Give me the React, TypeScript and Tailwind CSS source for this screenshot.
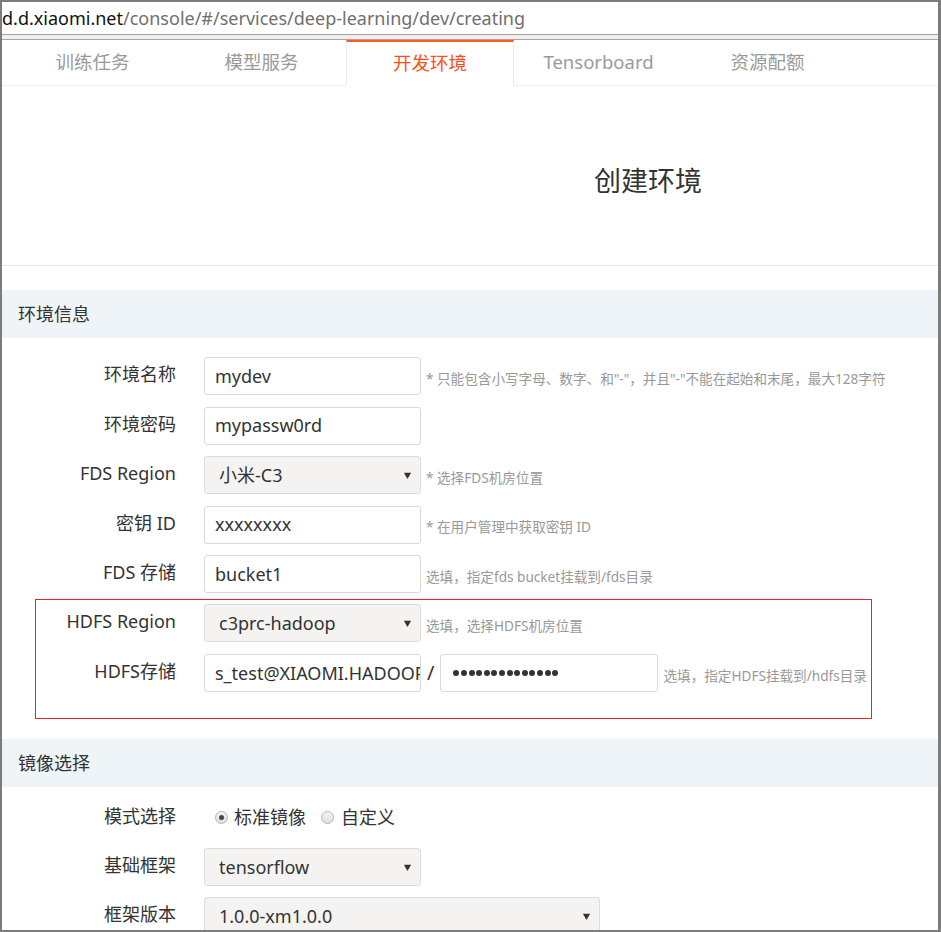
import React from "react";

const FONT = { fontFamily: '"Noto Sans", "Noto Sans CJK SC", sans-serif' };

const TABS = ["训练任务", "模型服务", "开发环境", "Tensorboard", "资源配额"];

function Caret() {
  return (
    <svg width="9" height="9" viewBox="0 0 10 10" className="shrink-0">
      <path d="M1 2 L9 2 L5 9 Z" fill="#333" />
    </svg>
  );
}

function TextBox({ value, width = "w-[217px]" }: { value: string; width?: string }) {
  return (
    <div
      className={`${width} flex h-[38px] shrink-0 items-center overflow-hidden whitespace-nowrap rounded-[3px] border border-[#d9d9d9] bg-white pl-[10px] text-[18px] text-[#333]`}
    >
      {value}
    </div>
  );
}

function SelectBox({ value, width = "w-[217px]" }: { value: string; width?: string }) {
  return (
    <div
      className={`${width} flex h-[38px] shrink-0 items-center justify-between rounded-[3px] border border-[#dcdcdc] bg-[#f4f3f1] pl-[14px] pr-[8px] text-[18px] text-[#333]`}
    >
      <span>{value}</span>
      <Caret />
    </div>
  );
}

function Hint({ children }: { children: React.ReactNode }) {
  return (
    <span className="mb-[6px] ml-[5px] self-end whitespace-nowrap text-[13.6px] text-[#999]">
      {children}
    </span>
  );
}

function Row({
  label,
  labelWidth = "w-[174px]",
  children,
}: {
  label: string;
  labelWidth?: string;
  children: React.ReactNode;
}) {
  return (
    <div className="flex h-[38px] items-stretch">
      <div
        className={`${labelWidth} flex shrink-0 items-center justify-end pb-[3px] text-[18px] text-[#333]`}
      >
        {label}
      </div>
      <div className="ml-[28px] flex items-stretch">{children}</div>
    </div>
  );
}

function SectionHeader({ title }: { title: string }) {
  return (
    <div className="flex h-[48px] shrink-0 items-center bg-[#eff4f8] pl-[16px] text-[18px] text-[#333]">
      {title}
    </div>
  );
}

function Radio({ checked }: { checked?: boolean }) {
  return (
    <span className="flex h-[13px] w-[13px] items-center justify-center rounded-full border border-[#b5b5b5] bg-gradient-to-b from-[#f4f4f4] to-[#dedede]">
      {checked && <span className="h-[5px] w-[5px] rounded-full bg-[#444]" />}
    </span>
  );
}

export default function App() {
  return (
    <div
      style={FONT}
      className="flex h-[932px] w-[941px] flex-col overflow-hidden border-2 border-r-[3px] border-[#7c7c7c] bg-white"
    >
      {/* Address bar */}
      <div className="flex h-[32px] shrink-0 items-center text-[18px]">
        <span className="text-[#111]">d.d.xiaomi.net</span>
        <span className="text-[#6f6f6f]">/console/#/services/deep-learning/dev/creating</span>
      </div>
      <div className="h-[6px] shrink-0 border-y border-[#a5a5a5] bg-[#f0efec]" />

      {/* Tabs */}
      <div className="flex h-[46px] shrink-0 border-b border-[#efefef]">
        <div className="w-[6px]" />
        {TABS.map((t, i) =>
          i === 2 ? (
            <div
              key={t}
              className="-mb-px flex w-[168px] items-center justify-center border-x border-t-2 border-x-[#ececec] border-t-[#ff5b1a] bg-white pb-[2px] text-[18.5px] text-[#ff4e0f]"
            >
              {t}
            </div>
          ) : (
            <div
              key={t}
              className="flex w-[169px] items-center justify-center pb-[2px] text-[18.5px] text-[#9a9a9a]"
            >
              {t}
            </div>
          )
        )}
      </div>

      {/* Title */}
      <div className="flex h-[180px] shrink-0 items-center border-b border-[#e8e8e8] pl-[592px]">
        <span className="pt-[12px] text-[27px] text-[#333]">创建环境</span>
      </div>

      <div className="h-[24px] shrink-0" />
      <SectionHeader title="环境信息" />

      <div className="mt-[19px] flex flex-col gap-[11.5px]">
        <Row label="环境名称">
          <TextBox value="mydev" />
          <Hint>* 只能包含小写字母、数字、和"-"，并且"-"不能在起始和末尾，最大128字符</Hint>
        </Row>
        <Row label="环境密码">
          <TextBox value="mypassw0rd" />
        </Row>
        <Row label="FDS Region">
          <SelectBox value="小米-C3" />
          <Hint>* 选择FDS机房位置</Hint>
        </Row>
        <Row label="密钥 ID">
          <TextBox value="xxxxxxxx" />
          <Hint>* 在用户管理中获取密钥 ID</Hint>
        </Row>
        <Row label="FDS 存储">
          <TextBox value="bucket1" />
          <Hint>选填，指定fds bucket挂载到/fds目录</Hint>
        </Row>
      </div>

      {/* HDFS box */}
      <div className="ml-[33px] mt-[6px] flex w-[837px] shrink-0 flex-col gap-[12px] border border-[#e3262d] pb-[26px] pt-[4px]">
        <Row label="HDFS Region" labelWidth="w-[140px]">
          <SelectBox value="c3prc-hadoop" />
          <Hint>选填，选择HDFS机房位置</Hint>
        </Row>
        <Row label="HDFS存储" labelWidth="w-[140px]">
          <TextBox value="s_test@XIAOMI.HADOOP" />
          <span className="ml-[6px] mr-[6px] flex items-center text-[20px] text-[#333]">/</span>
          <div className="flex h-[38px] w-[218px] shrink-0 items-center gap-[1.6px] rounded-[3px] border border-[#d9d9d9] bg-white pl-[12px]">
            {Array.from({ length: 14 }).map((_, i) => (
              <span key={i} className="h-[6px] w-[6px] rounded-full bg-[#333]" />
            ))}
          </div>
          <Hint>选填，指定HDFS挂载到/hdfs目录</Hint>
        </Row>
      </div>

      <div className="h-[20px] shrink-0" />
      <SectionHeader title="镜像选择" />

      <div className="mt-[12px] flex flex-col gap-[11px]">
        <Row label="模式选择">
          <div className="flex items-center pb-[2px] text-[18px] text-[#333]">
            <span className="ml-[11px]">
              <Radio checked />
            </span>
            <span className="ml-[6px]">标准镜像</span>
            <span className="ml-[15px]">
              <Radio />
            </span>
            <span className="ml-[7px]">自定义</span>
          </div>
        </Row>
        <Row label="基础框架">
          <SelectBox value="tensorflow" />
        </Row>
        <Row label="框架版本">
          <SelectBox value="1.0.0-xm1.0.0" width="w-[396px]" />
        </Row>
      </div>
    </div>
  );
}
